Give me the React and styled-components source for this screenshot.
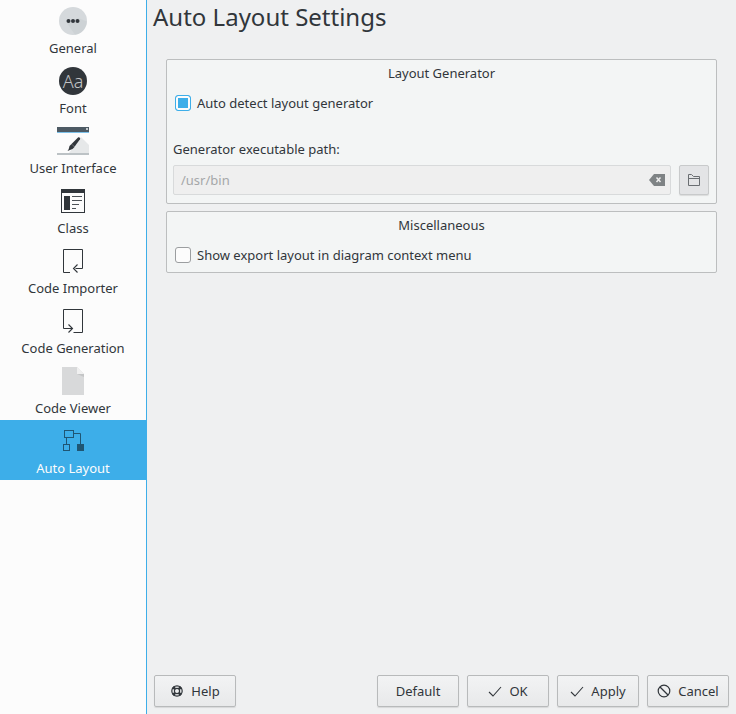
import React from 'react';
import styled, {createGlobalStyle} from 'styled-components';

const GlobalStyle = createGlobalStyle`
  html, body {
    margin: 0;
    padding: 0;
    background: #eff0f1;
  }
  body {
    font-family: "Noto Sans", sans-serif;
    font-size: 13px;
    color: #31363b;
  }
`;

const GeneralIcon = () => (
    <svg width="28" height="28" viewBox="0 0 28 28">
        <circle cx="14" cy="14" r="14" fill="#d5d9dc"/>
        <path d="M19 11l8.800 3.500a14 14 0 0 1-11.800 13.300L8 16z" fill="#c4c9cc" opacity="0.45"/>
        <circle cx="9.500" cy="14" r="2" fill="#31363b"/>
        <circle cx="14" cy="14" r="2" fill="#31363b"/>
        <circle cx="18.500" cy="14" r="2" fill="#31363b"/>
    </svg>
);

const FontIcon = () => (
    <FontBadge>Aa</FontBadge>
);

const InterfaceIcon = () => (
    <svg width="32" height="28" viewBox="0 0 32 28">
        <rect width="32" height="28" fill="#fcfcfc"/>
        <path d="M24 10l8 8v8H12z" fill="#e6e8e9"/>
        <rect width="32" height="5" fill="#4d5a64"/>
        <rect y="5" width="32" height="1" fill="#7cc0e8"/>
        <rect x="29" y="1" width="2" height="2" fill="#c5cbcf"/>
        <rect y="26" width="32" height="2" fill="#bcc2c5"/>
        <path d="M14.500 17l6.500-6.500c1.200-1 2.800.6 2 1.800l-5.500 7.500z" fill="#31363b"/>
        <path d="M14.500 17l3 3-2 2-5 2c1.500-1.500 1.500-3.500 2-5z" fill="#31363b"/>
    </svg>
);

const ClassIcon = () => (
    <svg width="24" height="24" viewBox="0 0 24 24">
        <rect width="24" height="24" fill="#31363b"/>
        <rect x="1" y="4" width="22" height="19" fill="#fcfcfc"/>
        <rect x="3" y="7" width="6" height="14" fill="#31363b"/>
        <path d="M11 7.500h10M11 11.500h10M11 15.500h7M11 19.500h4" stroke="#4d5257" fill="none"/>
    </svg>
);

const ImportIcon = () => (
    <svg width="20" height="24" viewBox="0 0 20 24" fill="none" stroke="#31363b">
        <path d="M7 23.500H.5V.5h19v19h-7"/>
        <path d="M14.500 15.500L10.500 19.500l4 4" strokeWidth="1.100"/>
    </svg>
);

const ExportIcon = () => (
    <svg width="20" height="24" viewBox="0 0 20 24" fill="none" stroke="#31363b">
        <path d="M19.500 23.500h-9M.5 19.500V.5h19v23"/>
        <path d="M.5 19.500h1.500"/>
        <path d="M5.500 15.500l4 4-4 4M1 19.500h8" strokeWidth="1.100"/>
    </svg>
);

const FileIcon = () => (
    <svg width="24" height="28" viewBox="0 0 24 28">
        <path d="M1 0h15l7 7v21H1z" fill="#d8d9da"/>
        <path d="M16 0l7 7h-7z" fill="#f0f0f0"/>
        <path d="M16 7h7v3z" fill="#c4c5c6"/>
    </svg>
);

const LayoutIcon = () => (
    <svg width="24" height="24" viewBox="0 0 24 24" fill="none" stroke="#1f5674" strokeWidth="1">
        <rect x="3.500" y="1.500" width="9" height="7"/>
        <rect x="2.500" y="15.500" width="6" height="6"/>
        <rect x="16.500" y="15.500" width="6" height="6" fill="#1f5674"/>
        <path d="M5.500 9v6M13 4.500h6.500V15"/>
    </svg>
);

const ClearIcon = () => (
    <svg width="16" height="12" viewBox="0 0 16 12">
        <path d="M5 0h11v12H5L0 6z" fill="#7f8385"/>
        <path d="M7.500 3.500l4 4.500M11.500 3.500l-4 4.500" stroke="#eeeeee" strokeWidth="1.500"/>
    </svg>
);

const FolderIcon = () => (
    <svg width="12" height="12" viewBox="0 0 12 12" fill="none" stroke="#6a6e72">
        <path d="M.5 11.500V.5h3l2 2h6v9zM.5 4.500h11"/>
    </svg>
);

const HelpIcon = () => (
    <svg width="14" height="14" viewBox="0 0 14 14" fill="none" stroke="#31363b" strokeWidth="1.200">
        <circle cx="7" cy="7" r="5.200"/>
        <circle cx="7" cy="7" r="2.600"/>
        <path d="M3 3l2.200 2.200M11 3L8.800 5.200M3 11l2.200-2.200M11 11L8.800 8.800" strokeWidth="2.600"/>
    </svg>
);

const CheckIcon = () => (
    <svg width="14" height="11" viewBox="0 0 14 11" fill="none" stroke="#31363b" strokeWidth="1.100">
        <path d="M1 6l4 4 8-9"/>
    </svg>
);

const CancelIcon = () => (
    <svg width="14" height="14" viewBox="0 0 14 14" fill="none" stroke="#31363b" strokeWidth="1.200">
        <circle cx="7" cy="7" r="5.800"/>
        <path d="M3 3l8 8"/>
    </svg>
);

const pages = [
    {label: 'General', icon: <GeneralIcon />},
    {label: 'Font', icon: <FontIcon />},
    {label: 'User Interface', icon: <InterfaceIcon />},
    {label: 'Class', icon: <ClassIcon />},
    {label: 'Code Importer', icon: <ImportIcon />},
    {label: 'Code Generation', icon: <ExportIcon />},
    {label: 'Code Viewer', icon: <FileIcon />},
    {label: 'Auto Layout', icon: <LayoutIcon />, active: true},
];

const App = () => (
    <Window>
        <GlobalStyle />
        <Sidebar>
            {pages.map(page => (
                <SideItem key={page.label} $active={page.active}>
                    <SideIcon>{page.icon}</SideIcon>
                    <span>{page.label}</span>
                </SideItem>
            ))}
        </Sidebar>
        <Main>
            <Title>Auto Layout Settings</Title>
            <Groups>
                <Group>
                    <GroupTitle>Layout Generator</GroupTitle>
                    <CheckRow>
                        <CheckBox $checked />
                        <span>Auto detect layout generator</span>
                    </CheckRow>
                    <FieldLabel>Generator executable path:</FieldLabel>
                    <FieldRow>
                        <PathInput>
                            <span>/usr/bin</span>
                            <ClearIcon />
                        </PathInput>
                        <ToolButton><FolderIcon /></ToolButton>
                    </FieldRow>
                </Group>
                <Group>
                    <GroupTitle>Miscellaneous</GroupTitle>
                    <CheckRow>
                        <CheckBox />
                        <span>Show export layout in diagram context menu</span>
                    </CheckRow>
                </Group>
            </Groups>
            <ButtonBar>
                <Button><HelpIcon />Help</Button>
                <ButtonGroup>
                    <Button>Default</Button>
                    <Button><CheckIcon />OK</Button>
                    <Button><CheckIcon />Apply</Button>
                    <Button><CancelIcon />Cancel</Button>
                </ButtonGroup>
            </ButtonBar>
        </Main>
    </Window>
);

const Window = styled.div`
  display: flex;
  width: 736px;
  height: 714px;
  overflow: hidden;
  background: #eff0f1;
`;

const Sidebar = styled.div`
  flex: none;
  width: 146px;
  height: 100%;
  background: #fcfcfc;
  border-right: 1px solid #3daee9;
`;

const SideItem = styled.div`
  display: flex;
  flex-direction: column;
  align-items: center;
  height: 60px;
  line-height: 18px;
  white-space: nowrap;
  background: ${props => (props.$active ? '#3daee9' : 'transparent')};
  color: ${props => (props.$active ? '#fcfcfc' : '#31363b')};
`;

const SideIcon = styled.div`
  display: flex;
  align-items: center;
  justify-content: center;
  height: 28px;
  margin: 7px 0 4px;
`;

const FontBadge = styled.div`
  display: flex;
  align-items: center;
  justify-content: center;
  width: 28px;
  height: 28px;
  border-radius: 50%;
  background: #31363b;
  color: #c2c4c6;
  font-size: 18px;
  font-weight: 300;
`;

const Main = styled.div`
  flex: 1;
  display: flex;
  flex-direction: column;
  min-width: 0;
  padding: 0 7px 7px 6px;
`;

const Title = styled.h1`
  margin: 0;
  height: 59px;
  font-size: 24px;
  font-weight: 400;
  line-height: 34px;
  color: #31363b;
`;

const Groups = styled.div`
  display: flex;
  flex-direction: column;
  gap: 7px;
  flex: 1;
  margin: 0 12px 0 13px;
`;

const Group = styled.div`
  padding: 4px 6px 8px;
  background: #f3f5f5;
  border: 1px solid #bcbebf;
  border-radius: 2px;
`;

const GroupTitle = styled.div`
  text-align: center;
  line-height: 18px;
`;

const CheckRow = styled.div`
  display: flex;
  align-items: center;
  gap: 6px;
  height: 18px;
  margin: 12px 0 0 2px;
`;

const CheckBox = styled.div`
  box-sizing: border-box;
  flex: none;
  width: 16px;
  height: 16px;
  border-radius: 3px;
  background: ${props => (props.$checked ? '#3daee9' : '#fcfcfc')};
  border: 1px solid ${props => (props.$checked ? '#3daee9' : '#9b9ea0')};
  box-shadow: ${props => (props.$checked ? 'inset 0 0 0 2px #fcfcfc' : 'none')};
`;

const FieldLabel = styled.div`
  margin-top: 28px;
  line-height: 18px;
`;

const FieldRow = styled.div`
  display: flex;
  gap: 8px;
  margin-top: 7px;
  padding-right: 1px;
`;

const PathInput = styled.div`
  box-sizing: border-box;
  flex: 1;
  display: flex;
  align-items: center;
  justify-content: space-between;
  height: 30px;
  padding: 0 5px 0 7px;
  background: #efefef;
  border: 1px solid #d8dadb;
  border-radius: 2px;
  color: #a5a7a9;
`;

const ToolButton = styled.div`
  box-sizing: border-box;
  flex: none;
  display: flex;
  align-items: center;
  justify-content: center;
  width: 30px;
  height: 30px;
  background: #e3e4e6;
  border: 1px solid #c8cacb;
  border-radius: 2px;
  box-shadow: 0 1px 1px rgba(0, 0, 0, 0.1);
`;

const ButtonBar = styled.div`
  display: flex;
  justify-content: space-between;
  padding-left: 1px;
`;

const ButtonGroup = styled.div`
  display: flex;
  gap: 8px;
`;

const Button = styled.div`
  box-sizing: border-box;
  display: flex;
  align-items: center;
  justify-content: center;
  gap: 7px;
  width: 82px;
  height: 32px;
  background: linear-gradient(#f2f3f4, #e8e9ea);
  border: 1px solid #b8babb;
  border-radius: 2px;
  box-shadow: 0 1px 1px rgba(0, 0, 0, 0.1);
  white-space: nowrap;
`;

export default App;
